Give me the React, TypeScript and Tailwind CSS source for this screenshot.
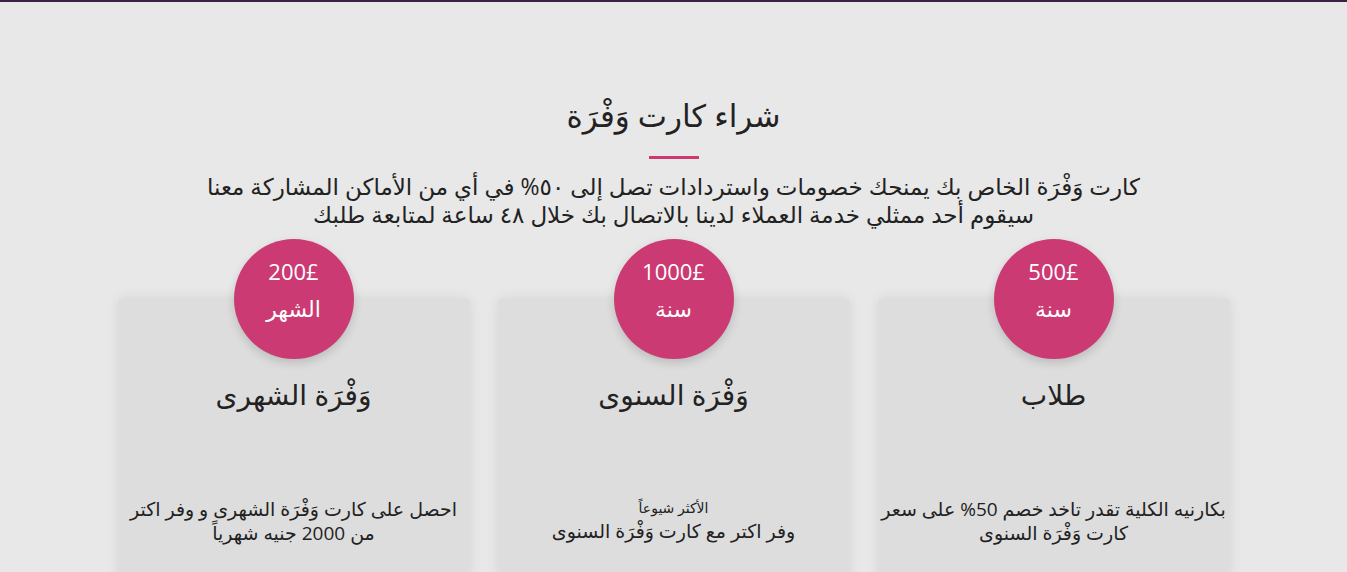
import React from "react";

type Plan = {
	price: string;
	period: string;
	title: string;
	tag?: string;
	desc: string[];
};

const plans: Plan[] = [
	{
		price: "500£",
		period: "سنة",
		title: "طلاب",
		desc: ["بكارنيه الكلية تقدر تاخد خصم 50% على سعر", "كارت وَفْرَة السنوى"],
	},
	{
		price: "1000£",
		period: "سنة",
		title: "وَفْرَة السنوى",
		tag: "الأكثر شيوعاً",
		desc: ["وفر اكتر مع كارت وَفْرَة السنوى"],
	},
	{
		price: "200£",
		period: "الشهر",
		title: "وَفْرَة الشهرى",
		desc: ["احصل على كارت وَفْرَة الشهرى و وفر اكتر", "من 2000 جنيه شهرياً"],
	},
];

function PlanCard({ plan }: { plan: Plan }) {
	return (
		<div className="w-[350px] flex flex-col items-center">
			{/* price badge sits half over the card */}
			<div className="relative z-10 w-[120px] h-[120px] rounded-full bg-[#cb3a72] shadow-[0_4px_10px_rgba(0,0,0,0.15)] flex flex-col items-center justify-center text-white text-[22px] leading-[37px] pb-[18px]">
				<span>{plan.price}</span>
				<span>{plan.period}</span>
			</div>
			<div className="-mt-[60px] w-full h-[340px] bg-[#dddddd] shadow-[0_0_12px_rgba(0,0,0,0.09)] flex flex-col items-center pt-[76px] text-[#222]">
				<h3 className="text-[28px] leading-[38px]">{plan.title}</h3>
				<div className="mt-[84px] flex flex-col items-center text-center">
					{plan.tag && <span className="text-[14px] leading-[22px]">{plan.tag}</span>}
					{plan.desc.map((line) => (
						<p key={line} className="text-[19px] leading-[24px] whitespace-nowrap">
							{line}
						</p>
					))}
				</div>
			</div>
		</div>
	);
}

export default function App() {
	return (
		<div
			dir="rtl"
			className="min-h-screen bg-[#e8e8e8] overflow-hidden text-[#222]"
			style={{ fontFamily: '"Open Sans", "DejaVu Sans", sans-serif' }}
		>
			<div className="h-[2px] bg-[#3d1f45]" />

			<section className="pt-[93px] flex flex-col items-center">
				<h2 className="text-[31px] leading-[40px]">شراء كارت وَفْرَة</h2>
				<div className="mt-[21px] w-[50px] h-[3px] bg-[#cc3a72]" />
				<p className="mt-[13px] text-[23px] leading-[28px] text-center">
					كارت وَفْرَة الخاص بك يمنحك خصومات واستردادات تصل إلى ٥٠% في أي من الأماكن المشاركة معنا
					<br />
					سيقوم أحد ممثلي خدمة العملاء لدينا بالاتصال بك خلال ٤٨ ساعة لمتابعة طلبك
				</p>

				<div className="mt-[11px] flex gap-[30px]">
					{plans.map((p) => (
						<PlanCard key={p.title} plan={p} />
					))}
				</div>
			</section>
		</div>
	);
}
